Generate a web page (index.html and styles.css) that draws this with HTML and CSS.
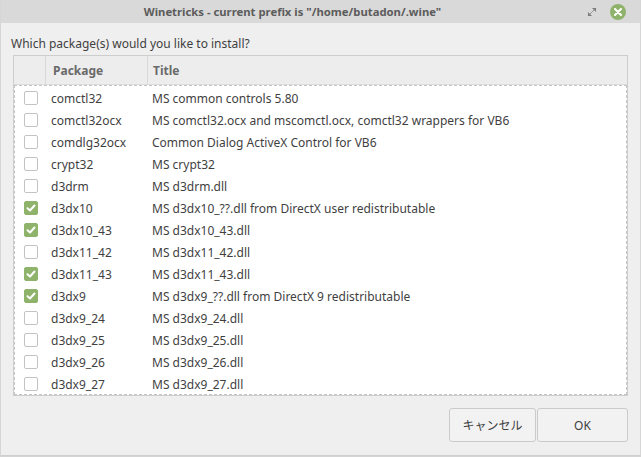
FILE: index.html
```html
<!DOCTYPE html>
<html>
<head>
<meta charset="utf-8">
<link rel="stylesheet" href="styles.css">
</head>
<body>
<div class="window">
  <div class="titlebar">
    <div class="title">Winetricks - current prefix is "/home/butadon/.wine"</div>
    <div class="controls">
      <span class="max-btn"><svg width="8" height="8" viewBox="0 0 8 8"><polygon points="4,0 8,0 8,4" fill="#7a7a7a"/><polygon points="0,4 0,8 4,8" fill="#7a7a7a"/><line x1="1.5" y1="6.5" x2="6.5" y2="1.5" stroke="#9a9a9a" stroke-width="1"/></svg></span>
      <span class="close-btn"><svg width="8" height="8" viewBox="0 0 8 8"><path d="M1 1 L7 7 M7 1 L1 7" stroke="#fff" stroke-width="2" stroke-linecap="round"/></svg></span>
    </div>
  </div>
  <div class="content">
    <div class="prompt">Which package(s) would you like to install?</div>
    <div class="frame">
      <div class="header">
        <div class="hcell hcheck"></div>
        <div class="hcell hpkg">Package</div>
        <div class="hcell htitle">Title</div>
      </div>
      <div class="list">
        <div class="row"><span class="cb"></span><span class="pkg">comctl32</span><span class="ttl">MS common controls 5.80</span></div>
        <div class="row"><span class="cb"></span><span class="pkg">comctl32ocx</span><span class="ttl">MS comctl32.ocx and mscomctl.ocx, comctl32 wrappers for VB6</span></div>
        <div class="row"><span class="cb"></span><span class="pkg">comdlg32ocx</span><span class="ttl">Common Dialog ActiveX Control for VB6</span></div>
        <div class="row"><span class="cb"></span><span class="pkg">crypt32</span><span class="ttl">MS crypt32</span></div>
        <div class="row"><span class="cb"></span><span class="pkg">d3drm</span><span class="ttl">MS d3drm.dll</span></div>
        <div class="row"><span class="cb on"><svg width="10" height="8" viewBox="0 0 10 8"><path d="M1.5 4.2 L4 6.5 L8.5 1.5" stroke="#fff" stroke-width="2" fill="none" stroke-linecap="round" stroke-linejoin="round"/></svg></span><span class="pkg">d3dx10</span><span class="ttl">MS d3dx10_??.dll from DirectX user redistributable</span></div>
        <div class="row"><span class="cb on"><svg width="10" height="8" viewBox="0 0 10 8"><path d="M1.5 4.2 L4 6.5 L8.5 1.5" stroke="#fff" stroke-width="2" fill="none" stroke-linecap="round" stroke-linejoin="round"/></svg></span><span class="pkg">d3dx10_43</span><span class="ttl">MS d3dx10_43.dll</span></div>
        <div class="row"><span class="cb"></span><span class="pkg">d3dx11_42</span><span class="ttl">MS d3dx11_42.dll</span></div>
        <div class="row"><span class="cb on"><svg width="10" height="8" viewBox="0 0 10 8"><path d="M1.5 4.2 L4 6.5 L8.5 1.5" stroke="#fff" stroke-width="2" fill="none" stroke-linecap="round" stroke-linejoin="round"/></svg></span><span class="pkg">d3dx11_43</span><span class="ttl">MS d3dx11_43.dll</span></div>
        <div class="row"><span class="cb on"><svg width="10" height="8" viewBox="0 0 10 8"><path d="M1.5 4.2 L4 6.5 L8.5 1.5" stroke="#fff" stroke-width="2" fill="none" stroke-linecap="round" stroke-linejoin="round"/></svg></span><span class="pkg">d3dx9</span><span class="ttl">MS d3dx9_??.dll from DirectX 9 redistributable</span></div>
        <div class="row"><span class="cb"></span><span class="pkg">d3dx9_24</span><span class="ttl">MS d3dx9_24.dll</span></div>
        <div class="row"><span class="cb"></span><span class="pkg">d3dx9_25</span><span class="ttl">MS d3dx9_25.dll</span></div>
        <div class="row"><span class="cb"></span><span class="pkg">d3dx9_26</span><span class="ttl">MS d3dx9_26.dll</span></div>
        <div class="row"><span class="cb"></span><span class="pkg">d3dx9_27</span><span class="ttl">MS d3dx9_27.dll</span></div>
      </div>
    </div>
    <div class="buttons">
      <button class="btn btn-cancel">キャンセル</button>
      <button class="btn btn-ok">OK</button>
    </div>
  </div>
</div>
</body>
</html>
```

FILE: styles.css
```css
* { box-sizing: border-box; }
html, body { margin: 0; padding: 0; }
body {
  width: 641px;
  height: 457px;
  overflow: hidden;
  background: #d4d4d4;
  font-family: "Noto Sans", "Noto Sans CJK JP", sans-serif;
  font-size: 12px;
  color: #3f3f3f;
}
.window {
  width: 641px;
  height: 456px;
  background: #efefef;
  border-left: 1px solid #d6d6d6;
  border-right: 1px solid #d6d6d6;
  border-bottom: 1px solid #cfcfcf;
  display: flex;
  flex-direction: column;
}
.titlebar {
  height: 23px;
  background: #d9d9d9;
  display: flex;
  align-items: center;
  flex: none;
}
.title {
  flex: 1;
  text-align: center;
  font-weight: bold;
  color: #5c5c5c;
  font-size: 11.3px;
}
.controls {
  width: 56px;
  display: flex;
  align-items: center;
  gap: 14px;
  padding-left: 4px;
}
.max-btn {
  width: 8px;
  height: 8px;
  display: flex;
}
.close-btn {
  width: 16px;
  height: 16px;
  border-radius: 50%;
  background: #8fb36b;
  display: flex;
  align-items: center;
  justify-content: center;
}
.content {
  flex: 1;
  display: flex;
  flex-direction: column;
  padding: 0 12px 12px 12px;
}
.prompt {
  margin-top: 13px;
  line-height: 16px;
  height: 16px;
  color: #3f3f3f;
  margin-left: -2px;
}
.frame {
  margin-top: 3px;
  border: 1px solid #cdcdcd;
  background: #ffffff;
  display: flex;
  flex-direction: column;
}
.header {
  display: grid;
  grid-template-columns: 32px 102px 1fr;
  height: 29px;
  background: #ededed;
  border-bottom: 1px solid #dcdcdc;
}
.hcell {
  display: flex;
  align-items: center;
  font-weight: bold;
  color: #6a6a6a;
}
.hcheck { border-right: 1px solid #d9d9d9; }
.hpkg { border-right: 1px solid #d9d9d9; padding-left: 7px; }
.htitle { padding-left: 5px; }
.list {
  height: 310px;
  overflow: hidden;
  background: #ffffff;
  border: 1px dashed #c4c4c4;
  padding-top: 1px;
}
.row {
  display: grid;
  grid-template-columns: 31px 102px 1fr;
  height: 22px;
  align-items: center;
  white-space: nowrap;
}
.cb {
  width: 14px;
  height: 14px;
  border: 1px solid #c3c3c3;
  border-radius: 2px;
  background: #fff;
  justify-self: center;
  display: flex;
  align-items: center;
  justify-content: center;
}
.cb.on {
  background: #8fb36b;
  border-color: #8fb36b;
}
.pkg { padding-left: 5px; }
.ttl { padding-left: 4px; }
.buttons {
  margin-top: 12px;
  display: flex;
  justify-content: flex-end;
  gap: 1px;
}
.btn {
  height: 34px;
  border: 1px solid #cbcbcb;
  border-radius: 3px;
  background: #f2f2f2;
  font-family: "Noto Sans", "Noto Sans CJK JP", sans-serif;
  font-size: 12px;
  color: #3f3f3f;
  padding: 0;
}
.btn-cancel { width: 87px; }
.btn-ok { width: 91px; }
```
